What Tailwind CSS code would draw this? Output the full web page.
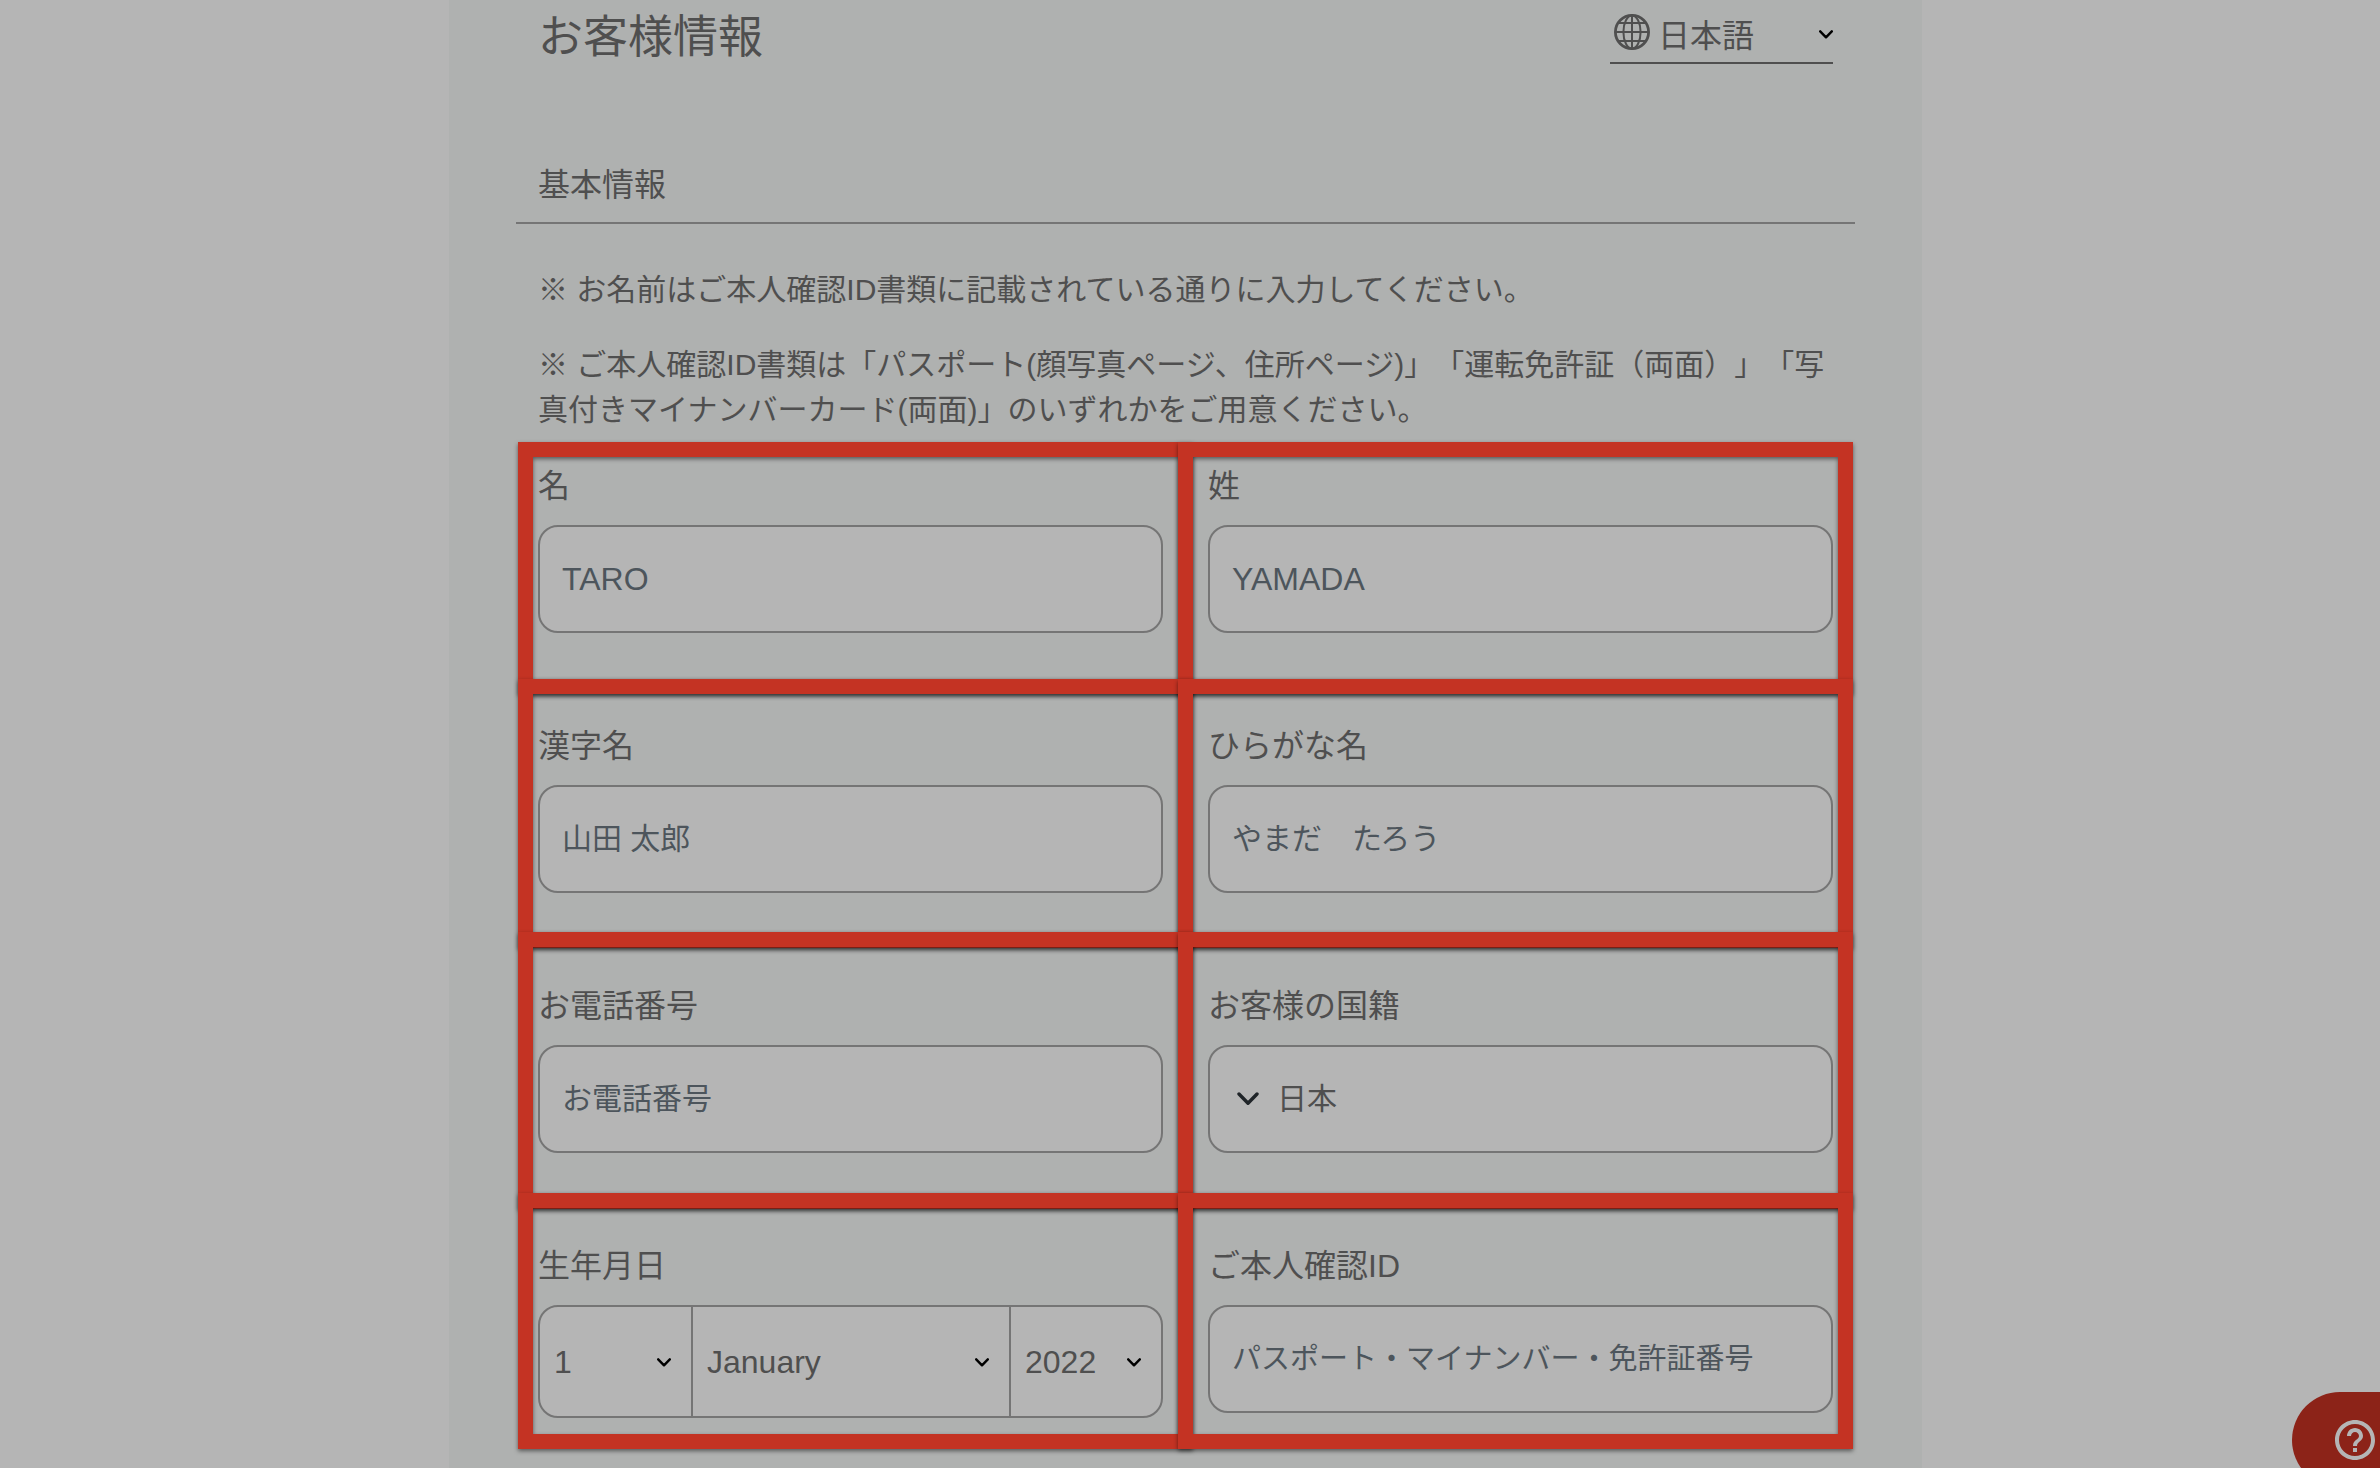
<!DOCTYPE html>
<html lang="ja">
<head>
  <meta charset="UTF-8">
  <title>お客様情報</title>
  <meta name="viewport" content="width=device-width, initial-scale=1">
  <!-- Tailwind CDN -->
  <script src="https://cdn.jsdelivr.net/npm/@tailwindcss/browser@4"></script>
</head>
<body class="bg-[#b5b5b5] text-[#4f4f4f] font-['Liberation_Sans','Noto_Sans_CJK_JP',sans-serif] overflow-hidden">

  <!-- ========== PAGE CONTENT ========== -->
  <div class="pr-[9px]">
    <main class="max-w-[1473px] min-h-screen mx-auto px-[67px] pt-2.5 bg-[#afb1b0]">

      <!-- Title + language -->
      <header class="flex justify-between items-start px-[22px]">
        <h1 class="text-[45px] leading-[56px]">お客様情報</h1>
        <div class="relative flex items-center w-[223px] h-[54px] border-b-2 border-[#4f4f4f]">
          <svg class="absolute left-1 top-1 w-9 h-9" viewBox="0 0 36 36" fill="none" stroke="#4f4f4f" stroke-width="2" aria-hidden="true">
            <circle cx="18" cy="18" r="16.6" stroke-width="2.800"/>
            <ellipse cx="18" cy="18" rx="8.600" ry="16.600"/>
            <path d="M18 1v34M1 18h34M4 9h28M4 27h28"/>
          </svg>
          <select id="lang" aria-label="言語" class="appearance-none w-full h-full pl-12 text-[32px] outline-none">
            <option>日本語</option>
            <option>English</option>
          </select>
          <svg class="absolute right-0 top-5 w-[14px] h-[9px] pointer-events-none" viewBox="0 0 14 9" fill="none" stroke="#000" stroke-width="2.400" stroke-linecap="round" stroke-linejoin="round" aria-hidden="true">
            <path d="M1.200 1.300L7 7.300L12.800 1.300"/>
          </svg>
        </div>
      </header>

      <!-- Section heading -->
      <h2 class="mt-24 px-[22px] pb-3.5 text-[32px] leading-[46px] border-b-2 border-[#757575]">基本情報</h2>

      <!-- Notes -->
      <div class="mt-[43px] px-[22px] space-y-[30px] text-[30px] leading-[45px] [text-spacing-trim:space-all]">
        <p>※ お名前はご本人確認ID書類に記載されている通りに入力してください。</p>
        <p>※ ご本人確認ID書類は「パスポート(顔写真ページ、住所ページ)」「運転免許証（両面）」「写真付きマイナンバーカード(両面)」のいずれかをご用意ください。</p>
      </div>

      <!-- Form -->
      <div class="relative mt-[30px]">
        <form id="form" class="grid grid-cols-2 gap-x-[45px] gap-y-[89px] px-[22px]">
          <div>
            <label for="firstName" class="block text-[32px] leading-[48px]">名</label>
            <input id="firstName" name="firstName" placeholder="TARO" class="block w-full h-[108px] mt-[15px] px-[22px] text-[32px] bg-[#b5b5b5] border-2 border-[#757575] rounded-[20px] outline-none placeholder:text-[#4d555c]">
          </div>
          <div>
            <label for="lastName" class="block text-[32px] leading-[48px]">姓</label>
            <input id="lastName" name="lastName" placeholder="YAMADA" class="block w-full h-[108px] mt-[15px] px-[22px] text-[32px] bg-[#b5b5b5] border-2 border-[#757575] rounded-[20px] outline-none placeholder:text-[#4d555c]">
          </div>
          <div>
            <label for="kanjiName" class="block text-[32px] leading-[48px]">漢字名</label>
            <input id="kanjiName" name="kanjiName" placeholder="山田 太郎" class="block w-full h-[108px] mt-[15px] px-[22px] text-[30px] bg-[#b5b5b5] border-2 border-[#757575] rounded-[20px] outline-none placeholder:text-[#4d555c]">
          </div>
          <div>
            <label for="kanaName" class="block text-[32px] leading-[48px]">ひらがな名</label>
            <input id="kanaName" name="kanaName" placeholder="やまだ　たろう" class="block w-full h-[108px] mt-[15px] px-[22px] text-[30px] bg-[#b5b5b5] border-2 border-[#757575] rounded-[20px] outline-none placeholder:text-[#4d555c]">
          </div>
          <div>
            <label for="phone" class="block text-[32px] leading-[48px]">お電話番号</label>
            <input id="phone" name="phone" type="tel" placeholder="お電話番号" class="block w-full h-[108px] mt-[15px] px-[22px] text-[30px] bg-[#b5b5b5] border-2 border-[#757575] rounded-[20px] outline-none placeholder:text-[#4d555c]">
          </div>
          <div>
            <label for="country" class="block text-[32px] leading-[48px]">お客様の国籍</label>
            <div class="relative mt-[15px]">
              <select id="country" name="country" class="appearance-none block w-full h-[108px] pl-[67px] pb-0.5 text-[30px] bg-[#b5b5b5] border-2 border-[#757575] rounded-[20px] outline-none">
                <option>日本</option>
              </select>
              <svg class="absolute left-[29px] top-[47px] w-[22px] h-[14px] pointer-events-none" viewBox="0 0 22 14" fill="none" stroke="#1f2428" stroke-width="3.400" stroke-linecap="round" stroke-linejoin="round" aria-hidden="true">
                <path d="M2 2L11 11.200L20 2"/>
              </svg>
            </div>
          </div>
          <fieldset>
            <legend class="block text-[32px] leading-[48px]">生年月日</legend>
            <div class="grid grid-cols-[153px_1fr_150px] h-[113px] mt-[15px] text-[32px] bg-[#b5b5b5] border-2 border-[#757575] rounded-[20px]">
              <div class="relative border-r-2 border-[#757575]">
                <select name="day" aria-label="日" class="appearance-none w-full h-full pl-3.5 outline-none">
                  <option>1</option>
                </select>
                <svg class="absolute right-5 top-[51px] w-[14px] h-[9px] pointer-events-none" viewBox="0 0 14 9" fill="none" stroke="#000" stroke-width="2.400" stroke-linecap="round" stroke-linejoin="round" aria-hidden="true">
                  <path d="M1.200 1.300L7 7.300L12.800 1.300"/>
                </svg>
              </div>
              <div class="relative border-r-2 border-[#757575]">
                <select name="month" aria-label="月" class="appearance-none w-full h-full pl-3.5 outline-none">
                  <option>January</option>
                </select>
                <svg class="absolute right-5 top-[51px] w-[14px] h-[9px] pointer-events-none" viewBox="0 0 14 9" fill="none" stroke="#000" stroke-width="2.400" stroke-linecap="round" stroke-linejoin="round" aria-hidden="true">
                  <path d="M1.200 1.300L7 7.300L12.800 1.300"/>
                </svg>
              </div>
              <div class="relative">
                <select name="year" aria-label="年" class="appearance-none w-full h-full pl-3.5 outline-none">
                  <option>2022</option>
                </select>
                <svg class="absolute right-5 top-[51px] w-[14px] h-[9px] pointer-events-none" viewBox="0 0 14 9" fill="none" stroke="#000" stroke-width="2.400" stroke-linecap="round" stroke-linejoin="round" aria-hidden="true">
                  <path d="M1.200 1.300L7 7.300L12.800 1.300"/>
                </svg>
              </div>
            </div>
          </fieldset>
          <div>
            <label for="idNumber" class="block text-[32px] leading-[48px]">ご本人確認ID</label>
            <input id="idNumber" name="idNumber" placeholder="パスポート・マイナンバー・免許証番号" class="block w-full h-[108px] mt-[15px] px-[22px] text-[29px] bg-[#b5b5b5] border-2 border-[#757575] rounded-[20px] outline-none placeholder:text-[#4d555c]">
          </div>
        </form>

        <!-- Highlight frames over the fields -->
        <div class="absolute inset-x-[2px] -top-5 pointer-events-none" aria-hidden="true">
          <div class="flex h-[252px]">
            <div class="flex-1 -mr-[15px] border-[15px] border-[#c43323] drop-shadow-[0_2px_2px_rgba(0,0,0,0.5)]"></div>
            <div class="flex-1 border-[15px] border-[#c43323] drop-shadow-[0_2px_2px_rgba(0,0,0,0.5)]"></div>
          </div>
          <div class="flex h-[269px] -mt-[15px]">
            <div class="flex-1 -mr-[15px] border-[15px] border-[#c43323] drop-shadow-[0_2px_2px_rgba(0,0,0,0.5)]"></div>
            <div class="flex-1 border-[15px] border-[#c43323] drop-shadow-[0_2px_2px_rgba(0,0,0,0.5)]"></div>
          </div>
          <div class="flex h-[277px] -mt-4">
            <div class="flex-1 -mr-[15px] border-[15px] border-[#c43323] drop-shadow-[0_2px_2px_rgba(0,0,0,0.5)]"></div>
            <div class="flex-1 border-[15px] border-[#c43323] drop-shadow-[0_2px_2px_rgba(0,0,0,0.5)]"></div>
          </div>
          <div class="flex h-[256px] -mt-4">
            <div class="flex-1 -mr-[15px] border-[15px] border-[#c43323] drop-shadow-[0_2px_2px_rgba(0,0,0,0.5)]"></div>
            <div class="flex-1 border-[15px] border-[#c43323] drop-shadow-[0_2px_2px_rgba(0,0,0,0.5)]"></div>
          </div>
        </div>
      </div>
    </main>
  </div>

  <!-- Help button -->
  <button type="button" aria-label="ヘルプ" class="fixed right-0 -bottom-5 flex items-center w-[88px] h-24 pl-[39px] bg-[#8c2318] rounded-l-full">
    <svg class="shrink-0 w-12 h-12" viewBox="0 0 24 24" fill="#b5b5b5" aria-hidden="true">
      <path d="M11 18h2v-2h-2v2zm1-16C6.480 2 2 6.480 2 12s4.480 10 10 10 10-4.480 10-10S17.520 2 12 2zm0 18c-4.410 0-8-3.590-8-8s3.590-8 8-8 8 3.590 8 8-3.590 8-8 8zm0-14c-2.210 0-4 1.790-4 4h2c0-1.100.9-2 2-2s2 .9 2 2c0 2-3 1.750-3 5h2c0-2.250 3-2.500 3-5 0-2.210-1.790-4-4-4z"/>
    </svg>
  </button>

</body>
</html>
